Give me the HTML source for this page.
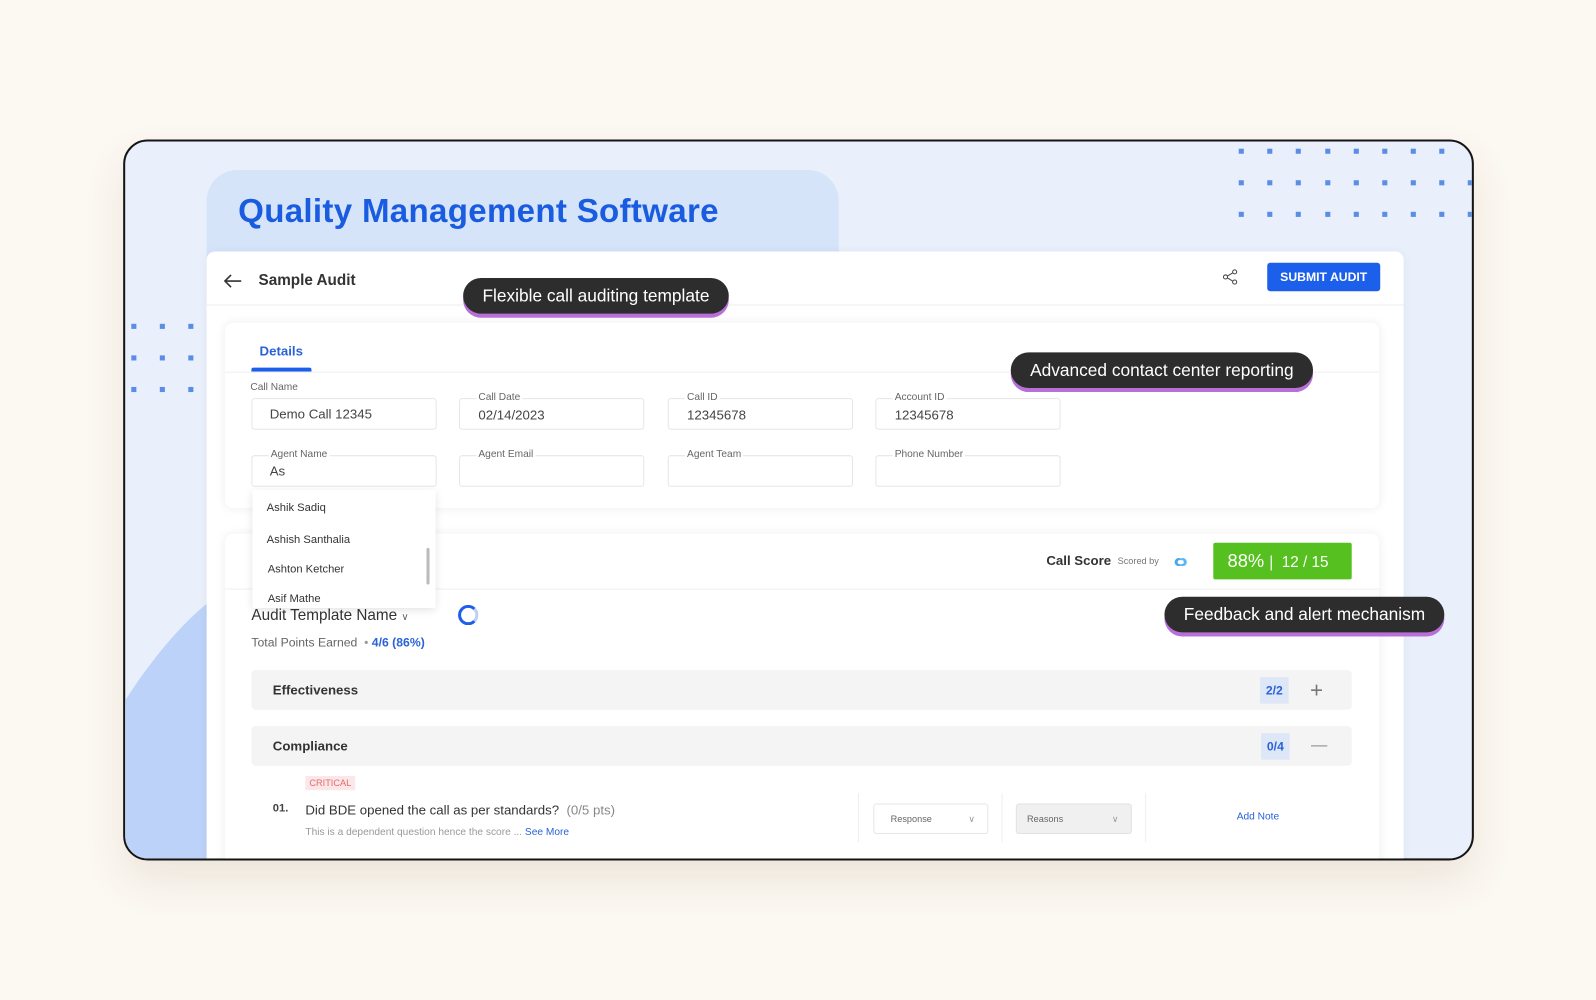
<!DOCTYPE html>
<html><head><meta charset="utf-8"><style>
*{margin:0;padding:0;box-sizing:border-box}
html,body{width:1596px;height:1000px;overflow:hidden;background:#fcf8f2;font-family:"Liberation Sans",sans-serif}
#w{position:absolute;left:0;top:0;width:1568px;height:982px;transform:scale(1.01786,1.0183);transform-origin:0 0}
.a{position:absolute}
.frame{left:121px;top:137px;width:1327px;height:708px;border:2px solid #151515;border-radius:24px;background:#e9f0fc;overflow:hidden;box-shadow:0 20px 40px rgba(120,100,60,.12)}
.dot{position:absolute;width:5px;height:5px;background:#5b8de6}
.tab{left:80px;top:28px;width:621px;height:120px;background:#d6e4fa;border-radius:30px 30px 0 0}
.title{left:111px;top:50px;font-size:32.5px;font-weight:bold;color:#1a5ce0;letter-spacing:.3px}
.card{left:80px;top:108px;width:1176px;height:620px;background:#fff;border-radius:8px;box-shadow:0 0 10px rgba(0,0,0,.05)}
.t{position:absolute;white-space:nowrap}
.lbl{font-size:10px;color:#666;background:#fff;padding:0 2px}
.inp{position:absolute;width:182px;height:31px;border:1px solid #e6e6e6;border-radius:3px;background:#fff}
.val{font-size:13px;color:#444}
.pill{position:absolute;background:#2d2d2d;color:#fff;font-size:17px;border-radius:18px;box-shadow:0 4px 0 #b870d8;padding:0 19px;line-height:35px;height:35px}
.sec{position:absolute;left:44px;width:1081px;height:39px;background:#f4f4f4;border-radius:4px}
</style></head><body><div id="w">
<div class="a frame">
 <svg class="a" style="left:-2px;top:440px" width="90" height="280"><path d="M0 112 C20 80 50 40 82 14 L90 10 L90 280 L0 280Z" fill="#bdd2f8"/></svg>
 <div class="a tab"></div>
 <div class="a title">Quality Management Software</div>
 <div class="a card">
  <svg class="t" style="left:16px;top:22px" width="20" height="14"><path d="M18 7H2M8 1L2 7l6 6" stroke="#333" stroke-width="1.6" fill="none"/></svg>
  <div class="t" style="left:51px;top:20px;font-size:15px;font-weight:bold;color:#333">Sample Audit</div>
  <svg class="t" style="left:998px;top:17px" width="16" height="16"><circle cx="12" cy="3" r="2" fill="none" stroke="#444"/><circle cx="3" cy="8" r="2" fill="none" stroke="#444"/><circle cx="12" cy="13" r="2" fill="none" stroke="#444"/><path d="M5 7l5-3M5 9l5 3" stroke="#444"/></svg>
  <div class="t" style="left:1042px;top:11px;width:111px;height:28px;background:#1b5fea;border-radius:3px;color:#fff;font-size:12px;font-weight:bold;text-align:center;line-height:28px">SUBMIT AUDIT</div>
  <div class="t" style="left:0;top:52px;width:1176px;height:1px;background:#eee"></div>
  <div class="t" style="left:18px;top:70px;width:1134px;height:182px;background:#fff;border-radius:8px;box-shadow:0 0 10px rgba(0,0,0,.07)"></div>
  <div class="t" style="left:52px;top:90px;font-size:13px;font-weight:bold;color:#2a62d8">Details</div>
  <div class="t" style="left:44px;top:114px;width:59px;height:4px;background:#1b5fea;border-radius:2px 2px 0 0"></div>
  <div class="t" style="left:18px;top:118px;width:1134px;height:1px;background:#eee"></div>
  <div class="inp" style="left:44px;top:144px"></div><div class="t lbl" style="left:43px;top:128px;padding:0">Call Name</div><div class="t val" style="left:62px;top:152px">Demo Call 12345</div>
  <div class="inp" style="left:248px;top:144px"></div><div class="t lbl" style="left:265px;top:138px">Call Date</div><div class="t val" style="left:267px;top:153px">02/14/2023</div>
  <div class="inp" style="left:453px;top:144px"></div><div class="t lbl" style="left:470px;top:138px">Call ID</div><div class="t val" style="left:472px;top:153px">12345678</div>
  <div class="inp" style="left:657px;top:144px"></div><div class="t lbl" style="left:674px;top:138px">Account ID</div><div class="t val" style="left:676px;top:153px">12345678</div>
  <div class="inp" style="left:44px;top:200px"></div><div class="t lbl" style="left:61px;top:194px">Agent Name</div><div class="t val" style="left:62px;top:208px">As</div>
  <div class="inp" style="left:248px;top:200px"></div><div class="t lbl" style="left:265px;top:194px">Agent Email</div>
  <div class="inp" style="left:453px;top:200px"></div><div class="t lbl" style="left:470px;top:194px">Agent Team</div>
  <div class="inp" style="left:657px;top:200px"></div><div class="t lbl" style="left:674px;top:194px">Phone Number</div>
  <div class="t" style="left:18px;top:277px;width:1134px;height:360px;background:#fff;border-radius:8px;box-shadow:0 0 10px rgba(0,0,0,.07)"></div>
  <div class="t" style="left:18px;top:331px;width:1134px;height:1px;background:#eee"></div>
  <div class="t" style="left:825px;top:296px;font-size:13px;font-weight:bold;color:#333">Call Score</div>
  <div class="t" style="left:895px;top:299px;font-size:9px;color:#777">Scored by</div>
  <svg class="t" style="left:950px;top:300px" width="14" height="10"><circle cx="5" cy="5" r="4" fill="#4aa8e8"/><circle cx="9" cy="5" r="4" fill="#5ab8f0"/><rect x="4" y="3" width="6" height="4" rx="2" fill="#fff"/></svg>
  <div class="t" style="left:989px;top:286px;width:136px;height:36px;background:#55c01f;border-radius:2px;color:#fff;font-size:18px;line-height:36px;padding-left:14px">88% <span style="font-size:15px">|&nbsp;&nbsp;12 / 15</span></div>
  <div class="t" style="left:44px;top:349px;font-size:15px;color:#333">Audit Template Name <span style="font-size:10px;color:#666">&#8744;</span></div>
  <div class="t" style="left:247px;top:347px;width:20px;height:20px;border:3px solid #1b5fea;border-right-color:#bcd0f6;border-radius:50%"></div>
  <div class="t" style="left:44px;top:377px;font-size:12px;color:#666">Total Points Earned &nbsp;<span style="color:#999">&#8226;</span> <b style="color:#2a62d8">4/6 (86%)</b></div>
  <div class="sec" style="top:411px"></div>
  <div class="t" style="left:65px;top:423px;font-size:13px;font-weight:bold;color:#333">Effectiveness</div>
  <div class="t" style="left:1035px;top:418px;width:28px;height:26px;background:#dde7f8;color:#2a62d8;font-weight:bold;font-size:12px;text-align:center;line-height:26px">2/2</div>
  <div class="t" style="left:1084px;top:418px;font-size:22px;color:#777;font-weight:300">+</div>
  <div class="sec" style="top:466px"></div>
  <div class="t" style="left:65px;top:478px;font-size:13px;font-weight:bold;color:#333">Compliance</div>
  <div class="t" style="left:1036px;top:473px;width:28px;height:26px;background:#dde7f8;color:#2a62d8;font-weight:bold;font-size:12px;text-align:center;line-height:26px">0/4</div>
  <div class="t" style="left:1085px;top:485px;width:16px;height:1px;background:#888"></div>
  <div class="t" style="left:97px;top:515px;background:#fbe7e7;color:#e26b6b;font-size:9px;padding:2px 4px">CRITICAL</div>
  <div class="t" style="left:65px;top:541px;font-size:11px;color:#444;font-weight:bold">01.</div>
  <div class="t" style="left:97px;top:541px;font-size:13px;color:#333">Did BDE opened the call as per standards? <span style="color:#888">&nbsp;(0/5 pts)</span></div>
  <div class="t" style="left:97px;top:565px;font-size:10px;color:#999">This is a dependent question hence the score ... <span style="color:#2a62d8">See More</span></div>
  <div class="t" style="left:640px;top:532px;width:1px;height:48px;background:#eee"></div>
  <div class="t" style="left:781px;top:532px;width:1px;height:48px;background:#eee"></div>
  <div class="t" style="left:922px;top:532px;width:1px;height:48px;background:#eee"></div>
  <div class="t" style="left:655px;top:542px;width:113px;height:30px;border:1px solid #e6e6e6;border-radius:3px;font-size:9px;color:#666;line-height:28px;padding-left:16px">Response<span style="position:absolute;right:12px;color:#999">&#8744;</span></div>
  <div class="t" style="left:795px;top:542px;width:114px;height:30px;border:1px solid #e2e2e2;background:#f0f0f0;border-radius:3px;font-size:9px;color:#666;line-height:28px;padding-left:10px">Reasons<span style="position:absolute;right:12px;color:#999">&#8744;</span></div>
  <div class="t" style="left:1012px;top:550px;font-size:10px;color:#2a62d8">Add Note</div>
  <div class="t" style="left:45px;top:234px;width:180px;height:116px;background:#fff;box-shadow:0 2px 8px rgba(0,0,0,.12);overflow:hidden">
   <div class="t" style="left:14px;top:12px;font-size:11px;color:#333">Ashik Sadiq</div>
   <div class="t" style="left:14px;top:43px;font-size:11px;color:#333">Ashish Santhalia</div>
   <div class="t" style="left:15px;top:72px;font-size:11px;color:#333">Ashton Ketcher</div>
   <div class="t" style="left:15px;top:101px;font-size:11px;color:#333">Asif Mathe</div>
   <div class="t" style="left:171px;top:57px;width:3px;height:36px;background:#bbb;border-radius:2px"></div>
  </div>
 </div>
</div>
<div class="pill" style="left:455px;top:273px">Flexible call auditing template</div>
<div class="pill" style="left:993px;top:346px">Advanced contact center reporting</div>
<div class="pill" style="left:1144px;top:586px">Feedback and alert mechanism</div>
<div class="a" style="left:0;top:0">
 <div class="dot" style="left:129px;top:318px"></div><div class="dot" style="left:157px;top:318px"></div><div class="dot" style="left:185px;top:318px"></div>
 <div class="dot" style="left:129px;top:349px"></div><div class="dot" style="left:157px;top:349px"></div><div class="dot" style="left:185px;top:349px"></div>
 <div class="dot" style="left:129px;top:380px"></div><div class="dot" style="left:157px;top:380px"></div><div class="dot" style="left:185px;top:380px"></div>
</div>
<svg class="a" style="left:1200px;top:140px" width="246" height="80">
 <g fill="#5b8de6">
  <rect x="17" y="6" width="5" height="5"/><rect x="45" y="6" width="5" height="5"/><rect x="73" y="6" width="5" height="5"/><rect x="102" y="6" width="5" height="5"/><rect x="130" y="6" width="5" height="5"/><rect x="158" y="6" width="5" height="5"/><rect x="186" y="6" width="5" height="5"/><rect x="214" y="6" width="5" height="5"/>
  <rect x="17" y="37" width="5" height="5"/><rect x="45" y="37" width="5" height="5"/><rect x="73" y="37" width="5" height="5"/><rect x="102" y="37" width="5" height="5"/><rect x="130" y="37" width="5" height="5"/><rect x="158" y="37" width="5" height="5"/><rect x="186" y="37" width="5" height="5"/><rect x="214" y="37" width="5" height="5"/><rect x="242" y="37" width="4" height="5"/>
  <rect x="17" y="68" width="5" height="5"/><rect x="45" y="68" width="5" height="5"/><rect x="73" y="68" width="5" height="5"/><rect x="102" y="68" width="5" height="5"/><rect x="130" y="68" width="5" height="5"/><rect x="158" y="68" width="5" height="5"/><rect x="186" y="68" width="5" height="5"/><rect x="214" y="68" width="5" height="5"/><rect x="242" y="68" width="4" height="5"/>
 </g>
</svg>
</div></body></html>
